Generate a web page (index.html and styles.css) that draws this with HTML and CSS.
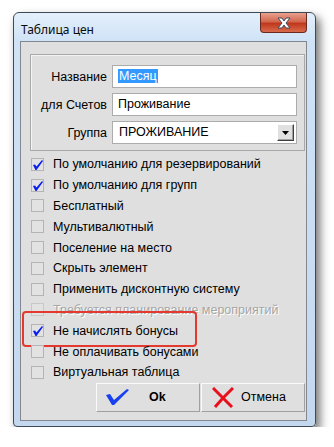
FILE: index.html
```html
<!DOCTYPE html>
<html lang="ru">
<head>
    <meta charset="UTF-8">
    <title>Таблица цен</title>
    <link rel="stylesheet" href="styles.css">
</head>
<body>
    <div class="window">
        <!-- заголовок окна -->
        <div class="titlebar">
            <span class="title">Таблица цен</span>
            <button class="close" type="button">
                <svg width="18" height="12" viewBox="0 0 18 12">
                    <path d="M3 1 L7 1 L9 4 L11 1 L15 1 L11 6 L15 11 L11 11 L9 8 L7 11 L3 11 L7 6 Z" fill="#fff" stroke="#3d4a5c" stroke-width="1"/>
                </svg>
            </button>
        </div>

        <!-- содержимое -->
        <div class="client">
            <div class="groupbox">
                <div class="field">
                    <label>Название</label>
                    <div class="edit"><span class="selected">Месяц</span></div>
                </div>
                <div class="field">
                    <label>для Счетов</label>
                    <div class="edit">Проживание</div>
                </div>
                <div class="field">
                    <label>Группа</label>
                    <div class="edit combo">
                        <span>ПРОЖИВАНИЕ</span>
                        <span class="drop"><svg width="7" height="4" viewBox="0 0 7 4"><path d="M0 0 H7 L3.5 4 Z" fill="#000"/></svg></span>
                    </div>
                </div>
            </div>

            <ul class="checks">
                <li class="checked"><span class="box"></span>По умолчанию для резервирований</li>
                <li class="checked"><span class="box"></span>По умолчанию для групп</li>
                <li><span class="box"></span>Бесплатный</li>
                <li><span class="box"></span>Мультивалютный</li>
                <li><span class="box"></span>Поселение на место</li>
                <li><span class="box"></span>Скрыть элемент</li>
                <li><span class="box"></span>Применить дисконтную систему</li>
                <li class="disabled"><span class="box"></span>Требуется планирование мероприятий</li>
                <li class="checked marked"><span class="box"></span>Не начислять бонусы</li>
                <li><span class="box"></span>Не оплачивать бонусами</li>
                <li><span class="box"></span>Виртуальная таблица</li>
            </ul>

            <div class="buttons">
                <button type="button" class="btn ok">
                    <svg width="23" height="16" viewBox="0 0 23 16"><path d="M0 6 L4 5 L8 11 L21 0 L23 1 L8 16 L6 16 Z" fill="#1640f0"/></svg>
                    <b>Ok</b>
                </button>
                <button type="button" class="btn cancel">
                    <svg width="22" height="21" viewBox="0 0 22 21"><path d="M1 1 L20 20 M21 1 L11 11 L3 20" stroke="#e8101c" stroke-width="3" fill="none"/></svg>
                    <span>Отмена</span>
                </button>
            </div>
        </div>
    </div>
</body>
</html>
```

FILE: styles.css
```css
* {
    box-sizing: border-box;
    margin: 0;
    padding: 0;
}
body {
    background: #ffffff;
    font-family: "Liberation Sans", Arial, sans-serif;
    font-size: 12.5px;
    color: #000;
}
/* рамка окна */
.window {
    position: relative;
    margin: 12px 0 0 13px;
    width: 303px;
    height: 415px;
    border: 1px solid #3f4a57;
    border-radius: 6px 6px 4px 4px;
    background: linear-gradient(180deg, #e3effb 0px, #cfe2f6 29px, #c3d8ef 100%);
    box-shadow: 4px 5px 10px rgba(0, 0, 0, 0.55);
    padding: 0 8px 5px 6px;
}
.titlebar {
    height: 28px;
    display: flex;
    justify-content: space-between;
    align-items: flex-start;
}
.title {
    font-family: "Noto Sans", "Open Sans", sans-serif;
    font-size: 12px;
    margin: 8px 0 0 1px;
    color: #0b0b0b;
}
.close {
    width: 47px;
    height: 20px;
    border: 1px solid #6b2a20;
    border-top: none;
    border-radius: 0 0 4px 4px;
    background: linear-gradient(180deg, #e8a08f 0%, #d2694f 45%, #c0381d 55%, #d86a4c 100%);
    display: flex;
    align-items: center;
    justify-content: center;
}
/* клиентская область */
.client {
    height: 380px;
    background: #dfdfdf;
    border: 1px solid #828790;
    padding: 12px 1px 0 9px;
}
.groupbox {
    border: 1px solid #a8a8a8;
    box-shadow: inset 1px 1px 0 #f4f4f4;
    height: 97px;
    padding: 10px 7px 0 0;
    display: flex;
    flex-direction: column;
    gap: 5px;
}
.field {
    display: flex;
    align-items: center;
    gap: 5px;
}
.field label {
    width: 76px;
    text-align: right;
}
.edit {
    flex: 1;
    height: 23px;
    background: #fff;
    border: 1px solid #acacac;
    padding: 0 5px;
    line-height: 21px;
}
.selected {
    background: #3399ff;
    color: #fff;
    padding: 0 1px;
}
.combo {
    display: flex;
    justify-content: space-between;
    align-items: center;
    padding: 0 2px 0 6px;
}
.drop {
    width: 17px;
    height: 17px;
    background: #e0e0e0;
    border: 1px solid;
    border-color: #fff #404040 #404040 #fff;
    box-shadow: inset -1px -1px 0 #a0a0a0;
    display: flex;
    align-items: center;
    justify-content: center;
}
/* флажки */
.checks {
    list-style: none;
    margin-top: 3px;
}
.checks li {
    position: relative;
    height: 20.8px;
    display: flex;
    align-items: center;
    gap: 9px;
    padding-left: 1px;
}
.box {
    width: 13px;
    height: 13px;
    border: 1px solid #b4b4b4;
    background: #e2e2e2;
    position: relative;
}
.checked .box::after {
    content: "";
    position: absolute;
    left: 1px;
    top: 1px;
    width: 10px;
    height: 10px;
    background: url("data:image/svg+xml;utf8,<svg xmlns='http://www.w3.org/2000/svg' width='10' height='10' viewBox='0 0 10 10'><path d='M0 5 L2 4.5 L3.5 6.5 L9 0 L10 1 L3.5 10 L2.5 10 Z' fill='%230a1ef0'/></svg>") no-repeat;
}
.disabled {
    color: #a6a6a6;
    text-shadow: 1px 1px 0 #fff;
}
.disabled .box {
    border-color: #c8c8c8;
}
.marked::before {
    content: "";
    position: absolute;
    left: -8px;
    top: -9px;
    width: 171px;
    height: 32px;
    border: 2px solid #e4392e;
    border-radius: 4px;
}
/* кнопки */
.buttons {
    display: flex;
    margin: 0 0 0 66px;
    gap: 1px;
}
.btn {
    width: 104px;
    height: 29px;
    background: #dfdfdf;
    border: 1px solid;
    border-color: #fafafa #a0a0a0 #a0a0a0 #fafafa;
    display: flex;
    align-items: center;
    font-family: "Liberation Sans", Arial, sans-serif;
    font-size: 12.5px;
    color: #000;
}
.ok svg {
    margin-left: 9px;
}
.ok b {
    margin-left: 20px;
}
.cancel svg {
    margin-left: 10px;
}
.cancel span {
    margin-left: 7px;
}
```
